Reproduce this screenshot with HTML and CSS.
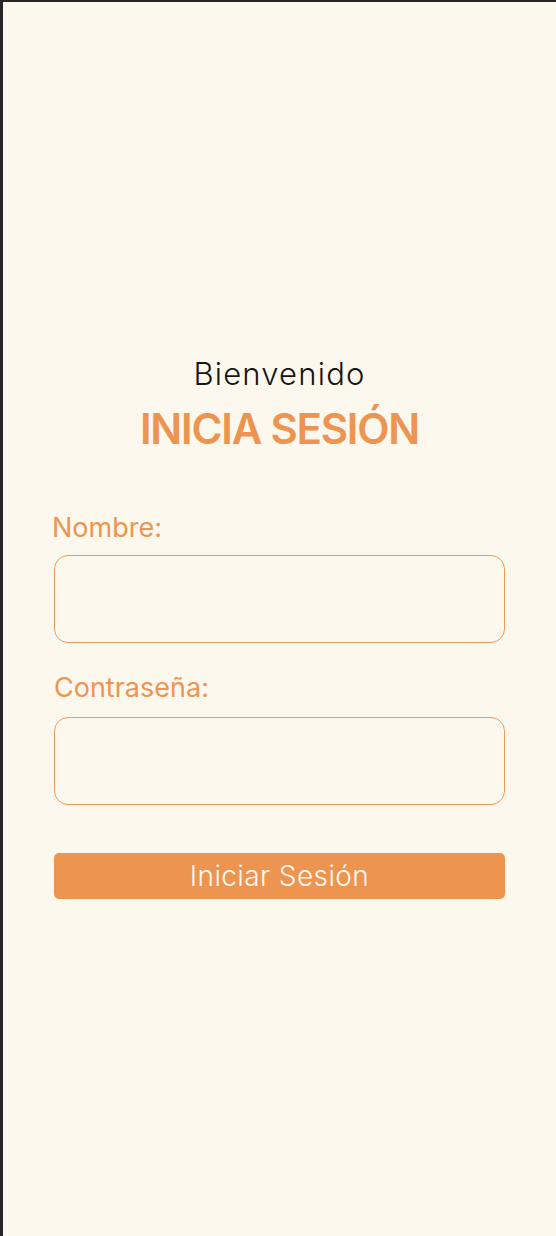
FILE: index.html
```html
<!DOCTYPE html>
<html lang="es">
<head>
<meta charset="utf-8">
<title>Inicia sesión</title>
<link rel="stylesheet" href="styles.css">
</head>
<body>
<main class="page">
  <header class="intro">
    <p class="welcome">Bienvenido</p>
    <h1 class="title">INICIA SESIÓN</h1>
  </header>
  <form class="form">
    <label class="label label-first" for="nombre">Nombre:</label>
    <input class="field" id="nombre" type="text">
    <label class="label" for="pass">Contraseña:</label>
    <input class="field" id="pass" type="password">
    <button class="submit" type="button">Iniciar Sesión</button>
  </form>
</main>
</body>
</html>
```
FILE: styles.css
```css
html, body {
  margin: 0;
  padding: 0;
}
body {
  background: #fdf8ee;
  font-family: "Inter", "Open Sans", sans-serif;
}
.page {
  box-sizing: border-box;
  height: 1236px;
  border-left: 3px solid #262626;
  border-top: 2px solid #262626;
  padding: 354px 51px 0 51px;
}
.intro {
  text-align: center;
}
.welcome {
  margin: 0;
  font-size: 31px;
  line-height: 36px;
  font-weight: 300;
  letter-spacing: 1.2px;
  color: #151515;
}
.title {
  margin: 12px 0 0;
  font-size: 42px;
  line-height: 50px;
  font-weight: 600;
  letter-spacing: -1.2px;
  color: #ed9451;
}
.form {
  display: flex;
  flex-direction: column;
  margin-top: 57px;
}
.label {
  font-size: 27px;
  line-height: 34px;
  color: #ed9451;
  margin: 28px 0 12px;
}
.label-first {
  margin-top: 0;
  margin-bottom: 10px;
  margin-left: -2px;
}
.field {
  box-sizing: border-box;
  height: 88px;
  width: 100%;
  border: 1.5px solid #ee9a5a;
  border-radius: 14px;
  background: transparent;
  outline: none;
}
.submit {
  margin-top: 48px;
  height: 46px;
  border: none;
  border-radius: 5px;
  background: #ed9451;
  color: #fff8ee;
  font-family: "Inter", "Open Sans", sans-serif;
  font-size: 28px;
  font-weight: 300;
  letter-spacing: 0.4px;
}
```
